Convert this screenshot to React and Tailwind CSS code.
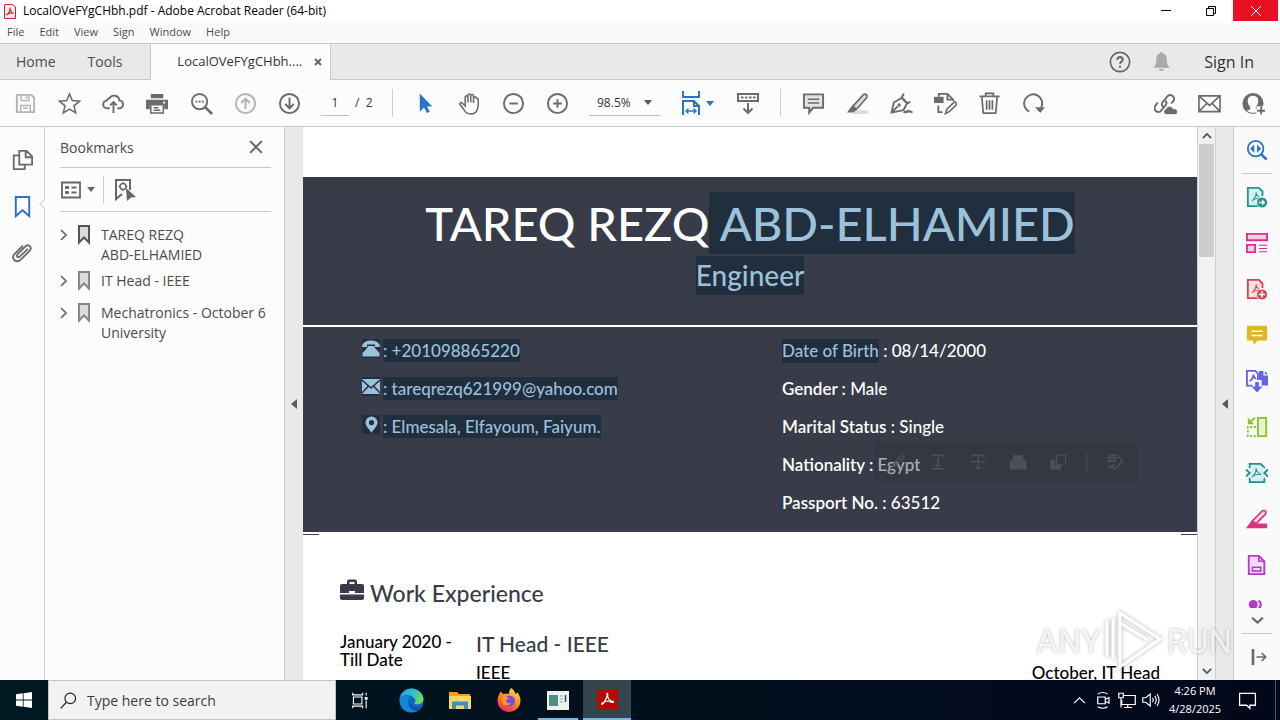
import { useState } from 'react'

const uiFont = "font-['Open_Sans','Noto_Sans',sans-serif]"
const docFont = "font-['Lato','Open_Sans',sans-serif]"

function Icon({ size = 24, className = '', sw = 2, children }) {
  return (
    <svg
      width={size}
      height={size}
      viewBox="0 0 24 24"
      fill="none"
      stroke="currentColor"
      strokeWidth={sw}
      className={`shrink-0 ${className}`}
      aria-hidden="true"
    >
      {children}
    </svg>
  )
}

function Caret({ className = '' }) {
  return (
    <svg width="8" height="5" viewBox="0 0 8 5" className={`shrink-0 ${className}`} aria-hidden="true">
      <path d="M0 0h8L4 5z" fill="currentColor" />
    </svg>
  )
}

const fileTools = [
  {
    label: 'Save',
    dim: true,
    icon: (
      <>
        <path d="M3 3h15l3 3v15H3z" />
        <path d="M7.500 3v6h8V3M7 21v-7h10v7M13 4.500v3M9.500 17h5" strokeWidth="1.500" />
      </>
    )
  },
  { label: 'Star', icon: <path d="M12 2l2.900 7 7.500.600-5.700 4.900 1.800 7.400L12 17.900l-6.500 4 1.800-7.400-5.700-4.900L9.100 9z" strokeWidth="1.600" /> },
  {
    label: 'Upload',
    icon: <path d="M8 17H5.500a4 4 0 0 1-.6-8 4 4 0 0 1 3-2.500 5.500 5.500 0 0 1 10.200 2.200A4.200 4.200 0 0 1 18.500 17H16M12 22v-11M8.500 14L12 10.500l3.500 3.500" />
  },
  {
    label: 'Print',
    icon: (
      <>
        <path d="M5 2h13v4.500H5zM0 8h23v10h-4v-4H4v4H0z" fill="currentColor" stroke="none" />
        <path d="M5 14v8h13v-8M8 16.500h5M8 19h7" strokeWidth="1.600" />
        <path d="M18 11h2" stroke="#fff" />
      </>
    )
  },
  {
    label: 'Find',
    icon: (
      <>
        <circle cx="10" cy="10" r="8" />
        <path d="M16 16l7 7" strokeWidth="2.800" />
        <path d="M5.700 10h2M9 10h2M12.300 10h2" />
      </>
    )
  },
  { label: 'Previous page', dim: true, icon: <><circle cx="12" cy="12" r="10" /><path d="M12 18V7M7.500 11.500L12 7l4.500 4.500" /></> },
  { label: 'Next page', icon: <><circle cx="12" cy="12" r="10" /><path d="M12 6v11M7.500 12.500L12 17l4.500-4.500" /></> }
]

const viewTools = [
  { label: 'Select', blue: true, icon: <path d="M6 1.500v19l4.500-4.300L13.500 22l3-1.500-3-5.500H19z" fill="currentColor" stroke="none" /> },
  {
    label: 'Hand',
    icon: (
      <path
        d="M7.500 14.500V5.500a1.400 1.400 0 0 1 2.900 0V11 3.500a1.400 1.400 0 0 1 2.900 0V11 4a1.400 1.400 0 0 1 2.900 0v7.500V6.500a1.400 1.400 0 0 1 2.900 0c1 0 2 .500 2 1.500 0 5 .500 8-1.500 11.500-1.200 2.500-3.400 3.500-6.500 3.500-3.600 0-5.600-2-7.200-5L2 13c-.500-1.800 1.400-2.600 2.600-1.300z"
        strokeWidth="1.600"
      />
    )
  },
  { label: 'Zoom out', icon: <><circle cx="12" cy="12" r="10" /><path d="M7.500 12h9" /></> },
  { label: 'Zoom in', icon: <><circle cx="12" cy="12" r="10" /><path d="M7.500 12h9M12 7.500v9" /></> }
]

const editTools = [
  { label: 'Comment', icon: <><path d="M2 2.500h20v14H11.500l-4 5v-5H2z" fill="#e4e4e4" /><path d="M6 7.500h12M6 11.500h12" strokeWidth="1.600" /></> },
  {
    label: 'Highlight',
    icon: (
      <>
        <path d="M10 19h13v4H6z" fill="#dcdcdc" stroke="none" />
        <path d="M7 15L18 3c2-2 5 0 3.500 3L11 18z" fill="#ddd" strokeWidth="1.700" />
        <path d="M6.500 14l5 4.500-4 3H1z" fill="currentColor" stroke="none" />
      </>
    )
  },
  {
    label: 'Sign',
    icon: (
      <>
        <path d="M1.500 21.500L4 11l8.500-5 5.500 5.500-4 7.500zM1.500 21.500L8 15M12 6l2.500-4.500M18 12l3-2M11.500 5.500l7 7" strokeWidth="2" />
        <circle cx="9.500" cy="13.500" r="1.800" fill="currentColor" stroke="none" />
        <path d="M14.500 22c2-4 2 1 3.500-1.500s1.500 1.500 3-.5l2.500 1.500" strokeWidth="2" />
      </>
    )
  },
  {
    label: 'Edit PDF',
    icon: (
      <>
        <path d="M5 5V2h9l6 6v1.500M14 2v6h6M4.500 14v7H9" strokeWidth="1.900" />
        <path d="M0 5h10v6.500H0z" fill="currentColor" stroke="none" />
        <path d="M12 22.500l1.500-4.500 8-8 2.500 2.500-8 8z" fill="#fcfcfc" strokeWidth="1.700" />
      </>
    )
  },
  { label: 'Delete', icon: <path d="M1.500 4.500h21M8 4V1.500h8V4M4 5l1.500 17h13L20 5M9 8.500v10M12 8.500v10M15 8.500v10" strokeWidth="1.800" /> },
  { label: 'Rotate', icon: <><path d="M7.500 20.500A9.500 9.500 0 1 1 20 16.500" /><path d="M13.500 16H24l-5 6z" fill="currentColor" stroke="none" /></> }
]

const shareTools = [
  {
    label: 'Share link',
    icon: (
      <>
        <path d="M9.500 15.500a4 4 0 0 1 0-5.500l5-6a4 4 0 0 1 6 5l-2.500 3M12 9a4 4 0 0 1 0 5l-5 6a4 4 0 0 1-6-5l3-4" />
        <path d="M12 23.500a3.200 3.200 0 0 1 .500-6 4 4 0 0 1 7.500 0c3-.500 5 1.500 4.500 3.500 0 1.500-1 2.500-2 2.500z" fill="currentColor" stroke="#fcfcfc" strokeWidth=".8" />
      </>
    )
  },
  { label: 'Email', icon: <path d="M1 4h22v16.500H1zM1.500 4.500L12 14 22.500 4.500M1.500 20l7.500-8M22.500 20L15 12" strokeWidth="1.700" /> },
  {
    label: 'Add people',
    icon: (
      <>
        <circle cx="11.500" cy="12" r="11" fill="currentColor" stroke="none" />
        <path d="M11.500 4c4 0 5.500 2.500 5.500 5.500 0 2.500-1 4.500-2.500 6v2c0 1 2 1.500 3.500 2-4 3-9 3-13 0 1.500-.5 3.500-1 3.500-2v-2C7 14 6 12 6 9.500 6 6.500 7.500 4 11.500 4z" fill="#fcfcfc" stroke="none" />
        <path d="M15 15h9v9h-9z" fill="#fcfcfc" stroke="none" />
        <path d="M20 15.500v8M16 19.500h8" />
      </>
    )
  }
]

function ToolButton({ tool }) {
  const color = tool.blue ? 'text-[#2a74c6]' : tool.dim ? 'text-[#b4b4b4]' : 'text-[#6b6b6b]'
  return (
    <button type="button" aria-label={tool.label} className={`flex h-11 w-11 items-center justify-center ${color}`}>
      <Icon size={23}>{tool.icon}</Icon>
    </button>
  )
}

function TitleBar() {
  return (
    <header className="flex h-[22px] items-center bg-white pl-1">
      <svg width="12" height="15" viewBox="0 0 12 15" aria-hidden="true">
        <path d="M1 .5h7.500L11.500 3v11.500H.5V1z" fill="#fdeaea" stroke="#d0232b" />
        <path d="M2.500 11c1.500-.5 4-4.500 3.500-7.500C5.500 6 8 9 9.500 9.200 7 8.500 4 9.500 2.500 11z" fill="none" stroke="#d0232b" strokeWidth="1.100" />
      </svg>
      <h1 className="ml-[7px] text-[12px] text-black">LocalOVeFYgCHbh.pdf - Adobe Acrobat Reader (64-bit)</h1>
      <div className="ml-auto flex self-start pr-0.5">
        <button type="button" aria-label="Minimize" className="flex h-[21px] w-[45px] items-center justify-center">
          <span className="h-px w-2.5 bg-black" />
        </button>
        <button type="button" aria-label="Restore" className="flex h-[21px] w-[45px] items-center justify-center">
          <svg width="10" height="10" viewBox="0 0 10 10" fill="none" stroke="#000" aria-hidden="true">
            <path d="M.5 2.500h7v7h-7zM2.500 2.500v-2h7v7h-2" />
          </svg>
        </button>
        <button type="button" aria-label="Close" className="flex h-[21px] w-[45px] items-center justify-center bg-[#e81123]">
          <svg width="10" height="10" viewBox="0 0 10 10" stroke="#fff" aria-hidden="true">
            <path d="M0 0l10 10M10 0L0 10" />
          </svg>
        </button>
      </div>
    </header>
  )
}

function MenuBar() {
  return (
    <nav className="flex h-[21px] items-center gap-[15px] bg-[#fafafa] pl-[7px] text-[11px] text-[#4b4b4b]">
      {['File', 'Edit', 'View', 'Sign', 'Window', 'Help'].map((item) => (
        <button key={item} type="button">{item}</button>
      ))}
    </nav>
  )
}

function TabBar() {
  return (
    <div className="flex h-[37px] items-stretch border-y border-[#c8c8c8] bg-[#e9e9e9] text-[14px] text-[#4b4b4b]">
      <button type="button" className="pr-4 pl-4">Home</button>
      <button type="button" className="mr-7 pl-4">Tools</button>
      <div className="-mb-px flex w-[181px] items-center border-x border-[#c8c8c8] bg-[#fcfcfc] pl-[26px] text-[13px] text-[#333]">
        <button type="button">LocalOVeFYgCHbh....</button>
        <button type="button" aria-label="Close tab" className="mr-2 ml-auto">
          <svg width="8" height="8" viewBox="0 0 8 8" stroke="#666" strokeWidth="2" aria-hidden="true">
            <path d="M1 1l6 6M7 1L1 7" />
          </svg>
        </button>
      </div>
      <div className="ml-auto flex items-center pr-[26px]">
        <button type="button" aria-label="Help" className="text-[#666]">
          <Icon size={22} sw={1.8}>
            <circle cx="12" cy="12" r="10.500" />
            <path d="M9 9.500c0-4 6.200-3.500 6 0 0 2-3 2.200-3 4.500M12 16v2.200" strokeWidth="2.200" />
          </Icon>
        </button>
        <button type="button" aria-label="Notifications" className="ml-5 text-[#a9a9a9]">
          <Icon size={21}>
            <path d="M12 1c1 0 1.500.6 1.500 1.800C17 3.500 18 6.500 18 9.500c0 5 1 7.500 3.500 9.500h-19C5 17 6 14.500 6 9.500c0-3 1-6 4.500-6.700C10.500 1.600 11 1 12 1zM9 20.500h6c-.5 3-5.500 3-6 0z" fill="currentColor" stroke="none" />
          </Icon>
        </button>
        <button type="button" className="ml-8 text-[16px] text-[#333]">Sign In</button>
      </div>
    </div>
  )
}

function Toolbar() {
  const [page, setPage] = useState('1')
  const [zoom, setZoom] = useState('98.5%')

  return (
    <div className="flex h-[47px] items-center border-b border-[#c8c8c8] bg-[#fcfcfc] pl-[3px] text-[12px] text-[#333]">
      {fileTools.map((tool) => <ToolButton key={tool.label} tool={tool} />)}
      <input
        aria-label="Page number"
        value={page}
        onChange={(e) => setPage(e.target.value)}
        className="ml-2.5 h-[26px] w-7 border-b border-[#bdbdbd] text-center outline-none"
      />
      <span className="ml-1.5 w-5 whitespace-pre">/  2</span>
      <span className="ml-[17px] h-7 w-px bg-[#cfcfcf]" />
      <div className="ml-2.5 flex">
        {viewTools.map((tool) => <ToolButton key={tool.label} tool={tool} />)}
      </div>
      <div className="relative ml-2.5 flex h-[26px] w-[71px] items-center border-b border-[#bdbdbd]">
        <select
          aria-label="Zoom level"
          value={zoom}
          onChange={(e) => setZoom(e.target.value)}
          className="h-full w-full appearance-none pl-2 outline-none"
        >
          <option>98.5%</option>
          <option>100%</option>
          <option>125%</option>
        </select>
        <Caret className="pointer-events-none absolute right-2 text-[#555]" />
      </div>
      <button type="button" aria-label="Fit width" className="ml-[19px] flex items-center gap-[3px] text-[#2a74c6]">
        <Icon size={24}>
          <path d="M4 0v6h16V0M4 24V10h11l5 5v9M15 10v5h5" />
          <path d="M7 20h10M9.500 17.500L7 20l2.500 2.500M14.500 17.500L17 20l-2.500 2.500" strokeWidth="1.400" />
        </Icon>
        <Caret />
      </button>
      <button type="button" aria-label="Hide toolbar" className="ml-[22px] text-[#6b6b6b]">
        <Icon size={24}>
          <path d="M2 3h20v7H2z" />
          <path d="M5 6.500h2.500M9 6.500h2.500M13 6.500h2.500M17 6.500h2.500M12 12v10M7.500 17.500L12 22l4.500-4.500" />
        </Icon>
      </button>
      <span className="ml-5 h-7 w-px bg-[#cfcfcf]" />
      <div className="ml-2.5 flex">
        {editTools.map((tool) => <ToolButton key={tool.label} tool={tool} />)}
      </div>
      <div className="ml-auto flex pr-[5px]">
        {shareTools.map((tool) => <ToolButton key={tool.label} tool={tool} />)}
      </div>
    </div>
  )
}

function NavRail() {
  return (
    <nav className="relative flex w-[45px] flex-col border-r border-[#cfcfcf] bg-[#fcfcfc] pt-2.5 text-[#6b6b6b]">
      <button type="button" aria-label="Page thumbnails" className="flex h-[46px] items-center justify-center">
        <Icon size={22}><path d="M9 2h8l6 6v9H9zM16 2v7h7M8 7H3v15h12v-4" /></Icon>
      </button>
      <button type="button" aria-label="Bookmarks" className="flex h-[46px] items-center justify-center text-[#2a74c6]">
        <Icon size={23}><path d="M5 2h14v20l-7-6-7 6z" /></Icon>
      </button>
      <button type="button" aria-label="Attachments" className="flex h-[46px] items-center justify-center">
        <Icon size={22}>
          <path d="M18.500 8.500l-9 8.500c-2 2-4-.5-2.500-2.300L15.500 6c3.500-3.500 8 .8 5 4.500L11 20c-5.500 5-11.500-.5-7-6L13 5" />
        </Icon>
      </button>
      <span className="absolute top-[73px] -right-[5px] h-2 w-2 rotate-45 border-b border-l border-[#cfcfcf] bg-[#fcfcfc]" />
    </nav>
  )
}

const bookmarks = [
  { lines: ['TAREQ REZQ', 'ABD-ELHAMIED'], active: true },
  { lines: ['IT Head - IEEE'] },
  { lines: ['Mechatronics - October 6', 'University'] }
]

function BookmarksPanel() {
  return (
    <aside className="w-60 shrink-0 border-r border-[#cfcfcf] bg-[#fcfcfc] pr-[13px] pl-[15px] text-[14px] text-[#4b4b4b]">
      <div className="flex h-[41px] items-center justify-between border-b border-[#c8c8c8] pr-2">
        <h2>Bookmarks</h2>
        <button type="button" aria-label="Close panel" className="text-[#666]">
          <Icon size={14} sw={3.4}><path d="M2 2l20 20M22 2L2 22" /></Icon>
        </button>
      </div>
      <div className="flex h-11 items-center border-b border-[#c8c8c8] text-[#666]">
        <button type="button" aria-label="Options" className="flex items-center gap-1.5">
          <svg width="21" height="18" viewBox="0 0 21 18" fill="none" stroke="currentColor" strokeWidth="1.800" aria-hidden="true">
            <path d="M2 1.500h18v15H2zM5 6.500h4M5 11.500h4M11.500 6.500h5M11.500 11.500h5" />
            <path d="M5.500 6.500h3M5.500 11.500h3" strokeWidth="3" />
          </svg>
          <Caret />
        </button>
        <span className="ml-2 h-7 w-px bg-[#cfcfcf]" />
        <button type="button" aria-label="Find current bookmark" className="ml-2.5">
          <Icon size={24}>
            <path d="M2 2h14v10M2 1v20l6-5" />
            <circle cx="9" cy="8.500" r="3" strokeWidth="1.500" />
            <path d="M9 4v2M9 11v2M4.500 8.500h2M11.500 8.500h2" strokeWidth="1.200" />
            <path d="M12 10l10 9-5 .500L13 23z" fill="currentColor" stroke="none" />
          </Icon>
        </button>
      </div>
      <ul className="flex flex-col gap-1.5 pt-[13px]">
        {bookmarks.map((mark) => (
          <li key={mark.lines[0]} className="flex min-h-[26px] items-start">
            <button type="button" aria-label="Expand" className="flex h-5 w-[17px] shrink-0 items-center text-[#666]">
              <svg width="7" height="12" viewBox="0 0 7 12" fill="none" stroke="currentColor" strokeWidth="1.600" aria-hidden="true">
                <path d="M1 1l5 5-5 5" />
              </svg>
            </button>
            <svg width="14" height="20" viewBox="0 0 14 20" className={`shrink-0 ${mark.active ? 'text-[#555]' : 'text-[#868686]'}`} aria-hidden="true">
              <path d="M2 1h10v16.500l-5-5-5 5z" fill="#dcdcdc" stroke="currentColor" strokeWidth="2" />
            </svg>
            <a href="#bookmark" className="ml-2.5 leading-5">
              {mark.lines.map((line) => <span key={line} className="block">{line}</span>)}
            </a>
          </li>
        ))}
      </ul>
    </aside>
  )
}

function Selected({ children, className = '' }) {
  return <span className={`bg-[#202e3d] whitespace-pre text-[#9dc0db] ${className}`}>{children}</span>
}

const contacts = [
  {
    text: ': +201098865220',
    icon: (
      <>
        <path d="M0 8C0 3 5 1.500 9 1.500S18 3 18 8h-5V5.500H5V8z" fill="#9dc0db" />
        <path d="M6 7h6l1 2 4.500 5v3.500H.500V14L5 9z" fill="#9dc0db" />
      </>
    )
  },
  {
    text: ': tareqrezq621999@yahoo.com',
    icon: <><path d="M0 2h18v15H0z" fill="#9dc0db" /><path d="M0 3l9 8 9-8M0 16l6.500-7M18 16l-6.500-7" fill="none" stroke="#202e3d" strokeWidth="1.500" /></>
  },
  {
    text: ': Elmesala, Elfayoum, Faiyum.',
    icon: <path d="M9.500 1.500a6 6 0 0 1 6 6c0 4-4 6.500-6 10.500-2-4-6-6.500-6-10.500a6 6 0 0 1 6-6zm0 3.500a2.600 2.600 0 1 0 0 5.200 2.600 2.600 0 0 0 0-5.200z" fill="#9dc0db" fillRule="evenodd" />
  }
]

const details = [
  ['Date of Birth', '08/14/2000'],
  ['Gender', 'Male'],
  ['Marital Status', 'Single'],
  ['Nationality', 'Egypt'],
  ['Passport No.', '63512']
]

// quick actions shown next to a text selection
function SelectionToolbar() {
  const icons = [
    ['Highlight text', <path d="M4 20l3-7L17 3l3 3L10 16z" />],
    ['Underline text', <path d="M5 6V3h14v3M12 3v14M8 17h8M4 21h16" />],
    ['Strikethrough text', <path d="M5 6V3h14v3M12 3v16M8 20h8M2 12h20" />],
    ['Redact', <path d="M2 11h20v10H2zM6 10V4h12v6M12 4v6" fill="currentColor" />],
    ['Copy', <><path d="M10 3h12v12H10z" strokeWidth="1.500" /><path d="M2 9h6v7h8v6H2z" fill="currentColor" stroke="none" /></>],
    ['Edit text', <path d="M5 10V3h10l7 8-9 10-4-1 1-5M2 6h10v5H2M4 16v3h4" />]
  ]
  return (
    <div className="absolute top-[315px] left-[571px] flex h-10 w-[264px] items-center rounded-sm bg-[#30333a]/40 pl-1 text-[#4c5058]">
      {icons.map(([label, icon], i) => (
        <div key={label} className="flex items-center">
          {i === 5 && <span className="mr-2 ml-2 h-5 w-px bg-[#454952]" />}
          <button type="button" aria-label={label} className="flex w-10 justify-center">
            <Icon size={18}>{icon}</Icon>
          </button>
        </div>
      ))}
    </div>
  )
}

function Resume() {
  return (
    <main className={`relative min-w-0 flex-1 overflow-hidden bg-white pt-[50px] font-medium ${docFont}`}>
      <section className="flex h-[148px] flex-col items-center gap-0.5 bg-[#383c48] pt-[15px]">
        <h2 className="flex text-[47px] leading-[62px] whitespace-pre text-white">
          TAREQ REZQ<Selected> ABD-ELHAMIED</Selected>
        </h2>
        <Selected className="text-[28px] leading-[39px]">Engineer</Selected>
      </section>
      <section className="mt-0.5 grid grid-cols-2 bg-[#383c48] pt-3 pb-[18px] text-[17px] leading-[24px] text-white">
        <ul className="flex flex-col gap-[15px] pl-[59px]">
          {contacts.map((c) => (
            <li key={c.text} className="flex h-[23px] gap-[3px]">
              <svg width="18" height="19" viewBox="0 0 18 19" className="bg-[#202e3d]" aria-hidden="true">{c.icon}</svg>
              <Selected>{c.text}</Selected>
            </li>
          ))}
        </ul>
        <dl className="flex flex-col gap-[15px] pl-8">
          {details.map(([label, value], i) => (
            <div key={label} className="flex h-[23px] whitespace-pre">
              <dt className={i === 0 ? 'font-medium' : 'font-semibold'}>
                {i === 0 ? <Selected className="inline-block">{label}</Selected> : label} :{' '}
              </dt>
              <dd>{value}</dd>
            </div>
          ))}
        </dl>
      </section>
      <div className="mt-0.5 flex justify-between">
        <span className="h-px w-4 bg-[#383c48]" />
        <span className="h-px w-4 bg-[#383c48]" />
      </div>
      <section className="px-[37px] pt-[42px]">
        <h3 className="flex items-center gap-1.5 text-[23px] leading-8 text-[#383c48]">
          <svg width="24" height="22" viewBox="0 0 24 22" className="mb-1.5" aria-hidden="true">
            <path d="M7 5V2.500Q7 .5 9 .5h6q2 0 2 2V5h5q2 0 2 2v7h-9v-2H9v2H0V7q0-2 2-2zM9.500 5h5V3h-5zM0 15.500h24V19q0 2-2 2H2q-2 0-2-2z" fill="#383c48" fillRule="evenodd" />
          </svg>
          Work Experience
        </h3>
        <div className="mt-[22px] flex text-[17px] leading-[18px] text-black">
          <p className="w-[136px] shrink-0 pt-0.5">January 2020 -<br />Till Date</p>
          <div className="flex-1">
            <h4 className="text-[21px] leading-[26px] text-[#383c48]">IT Head - IEEE</h4>
            <p className="mt-[7px] flex justify-between"><span>IEEE</span><span>October, IT Head</span></p>
          </div>
        </div>
      </section>
      <SelectionToolbar />
    </main>
  )
}

function ScrollBar() {
  return (
    <div className="flex w-[19px] shrink-0 flex-col items-center border-x border-[#d0d0d0] bg-[#f1f1f1] text-[#505050]">
      <Icon size={10} sw={4} className="mt-1 mb-[3px]"><path d="M2 17l10-10 10 10" /></Icon>
      <span className="h-[113px] w-[15px] bg-[#cdcdcd]" />
      <Icon size={10} sw={4} className="mt-auto mb-1"><path d="M2 7l10 10L22 7" /></Icon>
    </div>
  )
}

const pdfMark = <path d="M6.500 16c2-1 5-5.500 4.500-9 0 3 3 6 5.500 6.500-3.500-.5-7.500.5-10 2.500z" strokeWidth="1.200" />

const sideTools = [
  { label: 'Export PDF', color: 'text-[#1b998b]', icon: <><path d="M13 22H2V2h12l4 4v5" fill="#d5efed" />{pdfMark}<circle cx="17.500" cy="18" r="6" fill="currentColor" stroke="#fcfcfc" strokeWidth="1" /><path d="M14 18h6M17.500 15.500L20 18l-2.500 2.500" stroke="#fff" strokeWidth="1.500" /></> },
  { label: 'Organize pages', color: 'text-[#d6318f]', icon: <><path d="M1 2h22v7H1zM1 14h9v8H1z" fill="#f8cce5" /><path d="M14 14.500h9M14 18h9M14 21.500h9" strokeWidth="1.200" /></> },
  { label: 'Create PDF', color: 'text-[#d9434f]', icon: <><path d="M13 22H2V2h12l4 4v5" fill="#fbe0e2" />{pdfMark}<circle cx="17.500" cy="18" r="6" fill="currentColor" stroke="#fcfcfc" strokeWidth="1" /><path d="M14 18h7M17.500 14.500v7" stroke="#fff" strokeWidth="1.700" /></> },
  { label: 'Comment', color: 'text-[#dfb71f]', icon: <><path d="M1 2h22v16H13l-5 5v-5H1z" fill="currentColor" stroke="none" /><path d="M6 8h12M6 12.500h12" stroke="#fff" strokeWidth="1.600" /></> },
  { label: 'Combine files', color: 'text-[#6463e3]', icon: <><path d="M7 17H1V1h9l3 3v7M4 12c2-1 4-4 4-7 0 3 2 4 3 4.500" strokeWidth="2" /><path d="M14 1h5v5h5v11h-7v-6h-3z" fill="currentColor" stroke="none" /><path d="M20.500 1L24 4.500h-3.500z" fill="currentColor" stroke="none" /><path d="M10 13h4v5h4l-6 6.500L6 18h4z" fill="currentColor" stroke="none" /></> },
  { label: 'Compare files', color: 'text-[#89c427]', icon: <><path d="M13 2h9v20h-9z" fill="#e6f5cd" /><path d="M11 12H2v10h9" strokeDasharray="2.500 1.700" /><path d="M10 2L5 6" /><path d="M2 2l0 7h7z" fill="currentColor" stroke="none" /></> },
  { label: 'Compress PDF', color: 'text-[#1b8f94]', icon: <><path d="M4 7V2h12l4 4v1M4 17v5h16v-5" fill="#d5efef" /><path d="M4 6h16v12H4z" fill="#d5efef" stroke="none" />{pdfMark}<path d="M0 8l4 4-4 4M24 8l-4 4 4 4" /></> },
  { label: 'Redact', color: 'text-[#da3481]', icon: <><path d="M7 14L18 3c3-1 5 1 3 4L11 17z" fill="#fbd6e6" strokeWidth="1.800" /><path d="M6 14l5 3h12v5H0z" fill="currentColor" stroke="none" /></> },
  { label: 'Fill form', color: 'text-[#b43bc6]', icon: <><path d="M3 2h11l6 6v14H3z" fill="#f5d8fa" /><path d="M14 2v6h6M7 14.500h9v4H7z" strokeWidth="1.700" /></> }
]

function ToolsRail() {
  return (
    <aside className="flex w-[47px] shrink-0 flex-col border-l border-[#cfcfcf] bg-[#fafafa]">
      <button type="button" aria-label="Search tools" className="flex h-[46px] shrink-0 items-center justify-center text-[#2a74c6]">
        <Icon size={22}>
          <circle cx="10.500" cy="10.500" r="8.500" />
          <path d="M16.500 16.500l6 6" strokeWidth="3" />
          <path d="M9 6v9l-4.500-4.500zM12 6v9l4.500-4.500z" fill="currentColor" stroke="none" />
        </Icon>
      </button>
      <div className="mx-2 flex min-h-0 flex-1 flex-col overflow-hidden border-t border-[#c8c8c8]">
        {sideTools.map((tool) => (
          <button key={tool.label} type="button" aria-label={tool.label} className={`flex h-[46px] shrink-0 items-center justify-center ${tool.color}`}>
            <Icon size={22}>{tool.icon}</Icon>
          </button>
        ))}
        <button type="button" aria-label="Protect" className="flex h-[46px] shrink-0 justify-center pt-3 text-[#b43bc6]">
          <Icon size={18}>
            <circle cx="7" cy="6" r="6" fill="currentColor" stroke="none" />
            <path d="M14 1c4 2 4 8 0 10" strokeWidth="3" />
          </Icon>
        </button>
      </div>
      <div className="mx-2 flex h-[26px] items-center justify-center border-b border-[#c8c8c8] text-[#666]">
        <Icon size={13} sw={4}><path d="M2 7l10 9 10-9" /></Icon>
      </div>
      <button type="button" aria-label="Collapse tools" className="flex h-[46px] shrink-0 items-center justify-center pl-1 text-[#6b6b6b]">
        <Icon size={16}><path d="M3 0v24" strokeWidth="4" /><path d="M8 12h14M16 6l6 6-6 6" strokeWidth="2.600" /></Icon>
      </button>
    </aside>
  )
}

function Gutter({ className }) {
  return (
    <button type="button" aria-label="Toggle pane" className={`flex shrink-0 items-center justify-center bg-[#e9e9e9] ${className}`}>
      <svg width="6" height="10" viewBox="0 0 6 10" aria-hidden="true"><path d="M6 0v10L0 5z" fill="#5b5b5b" /></svg>
    </button>
  )
}

function Watermark() {
  return (
    <div className="pointer-events-none absolute right-12 bottom-[48px] flex items-center gap-[3px] font-['Liberation_Sans_Narrow','Roboto',sans-serif] text-[33px] leading-none text-white/80 [text-shadow:0_0_3px_rgba(0,0,0,.3)]">
      <span>ANY</span>
      <svg width="60" height="62" viewBox="0 0 60 62" fill="none" stroke="#fff" strokeWidth="3" className="opacity-80 drop-shadow-[0_0_2px_rgba(0,0,0,.4)]" aria-hidden="true">
        <path d="M16 3l40 26-40 28zM16 13l28 17M9 8v40M3 11v36" />
      </svg>
      <span>RUN</span>
    </div>
  )
}

function EdgeIcon() {
  return (
    <svg width="25" height="25" viewBox="0 0 24 24" aria-hidden="true">
      <defs>
        <linearGradient id="edgeTop" x1="0" y1="0" x2="1" y2=".4">
          <stop offset="0" stopColor="#1d9fe8" />
          <stop offset=".6" stopColor="#35c1c9" />
          <stop offset="1" stopColor="#66dc62" />
        </linearGradient>
      </defs>
      <circle cx="12" cy="12" r="11.500" fill="#1467bd" />
      <path d="M.5 11.500C1 5 6 .5 12 .5s11.500 5 11.500 10c0 5-6 6-9 4.500 1.500-1.500 2-3 .5-5C11 5 2 6 .5 11.500z" fill="url(#edgeTop)" />
      <path d="M.5 12C2 7 8 6 10.500 9c-3 2.500-3 9 3.500 11.500 3 1 6 0 8-2C17 26 1 25.500.5 12z" fill="#1385db" />
      <path d="M10.500 10c-2 4 2 8.500 6.500 8.500 2.500 0 4-.5 6-2-1 2.500-3 4.500-5 5.500-6 .5-11-6-7.500-12z" fill="#12519e" />
    </svg>
  )
}

function Taskbar() {
  return (
    <footer className="flex h-10 shrink-0 items-stretch bg-linear-to-r from-[#001821] to-[#02081a] text-white">
      <button type="button" aria-label="Start" className="flex w-12 items-center justify-center">
        <svg width="16" height="16" viewBox="0 0 16 16" fill="#fff" aria-hidden="true">
          <path d="M0 2.300L6.800 1.300V7.600H0zM7.600 1.200L16 0v7.600H7.600zM0 8.400h6.800v6.300L0 13.700zM7.600 8.400H16V16l-8.400-1.200z" />
        </svg>
      </button>
      <label className="flex w-72 items-center border border-[#c4c4c4] bg-[#f2f2f2] pl-[11px] text-[#222]">
        <Icon size={17} sw={1.7}><circle cx="14.500" cy="9" r="7.500" /><path d="M9 14.500L1 23" /></Icon>
        <input aria-label="Search" placeholder="Type here to search" className="ml-2.5 w-full text-[14px] outline-none placeholder:text-[#3c3c3c]" />
      </label>
      <div className="flex gap-px">
        <button type="button" aria-label="Task view" className="mr-0.5 flex w-12 items-center justify-center">
          <Icon size={17} sw={1.6}><path d="M1 1v3h14V1M1 23v-3h14v3M2 7h12v10H2zM20 1v4M20 12v11" /><path d="M18 7h4v4h-4z" fill="currentColor" stroke="none" /></Icon>
        </button>
        <button type="button" aria-label="Edge" className="flex w-12 items-center justify-center"><EdgeIcon /></button>
        <button type="button" aria-label="File Explorer" className="flex w-12 items-center justify-center">
          <svg width="22" height="19" viewBox="0 0 22 19" aria-hidden="true">
            <path d="M0 1h8l2 2h11v4H0z" fill="#e8a41c" />
            <path d="M0 5h22v13H0z" fill="#fbd567" />
            <path d="M3 18v-6.500q0-1 1-1h14q1 0 1 1V18h-4v-3.500H7V18z" fill="#3f8fc7" />
          </svg>
        </button>
        <button type="button" aria-label="Firefox" className="flex w-12 items-center justify-center">
          <svg width="24" height="24" viewBox="0 0 24 24" aria-hidden="true">
            <defs>
              <linearGradient id="fox" x1=".8" y1="0" x2=".3" y2="1">
                <stop offset="0" stopColor="#ffe14a" />
                <stop offset=".5" stopColor="#ff8a1c" />
                <stop offset="1" stopColor="#f0255b" />
              </linearGradient>
            </defs>
            <path d="M14 0c3 2 4 4 4.500 6l2-1.500C22.500 7 23.500 10 23.500 12.500 23.500 19 18.500 24 12 24S.5 19 .5 12.500C.5 9 2 6 4 3.500L6 6c3-.5 5-.5 6 0 0-2 .5-4 2-6z" fill="url(#fox)" />
            <circle cx="12.500" cy="13" r="5.500" fill="#7a4ae0" />
            <path d="M6 9c3-1 4 0 6 1.500l-3 1.500c0 3 3 4 5 3-2 4-9 3-9-2z" fill="#ff9a28" />
          </svg>
        </button>
        <button type="button" aria-label="App window" className="flex w-12 items-center justify-center bg-[linear-gradient(#76b9ed,#76b9ed)] bg-size-[40px_2px] bg-bottom bg-no-repeat">
          <svg width="22" height="19" viewBox="0 0 22 19" aria-hidden="true">
            <path d="M0 0h22v19H0z" fill="#eef1ef" />
            <path d="M2 4h9v11H2z" fill="#4f9180" />
            <path d="M13 5h3M13 8h3M13 11h3" stroke="#8ba49c" />
            <path d="M18.500 4v7" stroke="#24505e" strokeWidth="1.500" />
          </svg>
        </button>
        <button type="button" aria-label="Acrobat Reader" className="flex w-12 items-center justify-center border-b-2 border-[#76b9ed] bg-[#34454e]">
          <svg width="21" height="21" viewBox="0 0 21 21" aria-hidden="true">
            <rect width="21" height="21" rx="3" fill="#b30b00" />
            <path d="M5 15.500c-1 0 0-1.500 2-2.500 2-2.500 3.500-6 3-8.500 1-.5 1 1 .5 2.500.5 3 2.500 4.500 4 5 2.500 0 2.500 1.500 1 1.500-1.500 0-3-1-4-1.500-1.500 0-3 .5-4 1-1 1.500-2 2.500-2.500 2.500z" fill="none" stroke="#fff" strokeWidth="1.200" />
          </svg>
        </button>
      </div>
      <div className="ml-auto flex items-center">
        <button type="button" aria-label="Show hidden icons" className="flex w-6 justify-center"><Icon size={13}><path d="M2 17L12 7l10 10" /></Icon></button>
        <button type="button" aria-label="Meet now" className="flex w-6 justify-center"><Icon size={18} sw={1.6}><path d="M5 8h10v9H5zM15 11l5-2v7l-5-2M5 4q7-4 13 0M5 21q7 4 13 0" /></Icon></button>
        <button type="button" aria-label="Network" className="flex w-6 justify-center"><Icon size={18} sw={1.6}><path d="M7 6h16v12H5v-6M13 18v4M8 22h11M1 3h6v6H1zM4 9v13" /></Icon></button>
        <button type="button" aria-label="Volume" className="flex w-6 justify-center"><Icon size={18} sw={1.5}><path d="M1 9h4l6-5v16l-6-5H1zM14 9q2 3 0 6M17 6.500q4 5.500 0 11M20 4q5.500 8 0 16" /></Icon></button>
        <button type="button" className="ml-1.5 w-[52px] text-center text-[11px] leading-[18px] whitespace-nowrap">4:26 PM<br />4/28/2025</button>
        <button type="button" aria-label="Action center" className="flex w-[52px] justify-center"><Icon size={19} sw={1.6}><path d="M2 3h20v15h-7v4l-4-4H2z" /></Icon></button>
        <span className="ml-0.5 h-10 w-[5px] border-l border-[#4b5563]" />
      </div>
    </footer>
  )
}

export default function App() {
  return (
    <div className={`relative flex h-screen flex-col overflow-hidden bg-[#fafafa] ${uiFont}`}>
      <TitleBar />
      <MenuBar />
      <TabBar />
      <Toolbar />
      <div className="flex min-h-0 flex-1">
        <NavRail />
        <BookmarksPanel />
        <Gutter className="w-[18px]" />
        <Resume />
        <ScrollBar />
        <Gutter className="w-[17px]" />
        <ToolsRail />
      </div>
      <Taskbar />
      <Watermark />
    </div>
  )
}
